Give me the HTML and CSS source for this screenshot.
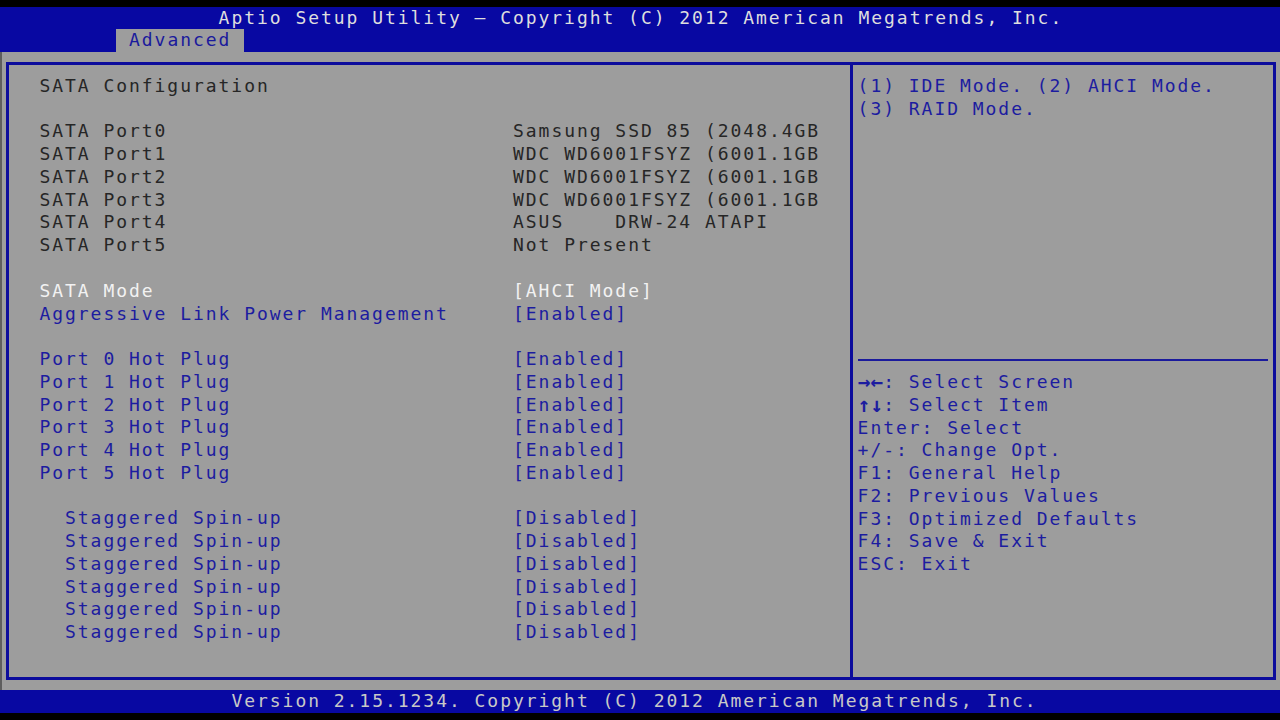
FILE: index.html
```html
<!DOCTYPE html>
<html>
<head>
<meta charset="utf-8">
<link rel="stylesheet" href="styles.css">
</head>
<body>
<div class="screen">
  <header class="header">
    <div class="row title">Aptio Setup Utility – Copyright (C) 2012 American Megatrends, Inc.</div>
    <div class="row tabs"><span class="tab"> Advanced </span></div>
  </header>
  <main class="main">
    <div class="box">
      <section class="left">
        <div class="row dark">SATA Configuration</div>
        <div class="row"></div>
        <div class="row item dark"><span class="label">SATA Port0</span><span class="value">Samsung SSD 85 (2048.4GB</span></div>
        <div class="row item dark"><span class="label">SATA Port1</span><span class="value">WDC WD6001FSYZ (6001.1GB</span></div>
        <div class="row item dark"><span class="label">SATA Port2</span><span class="value">WDC WD6001FSYZ (6001.1GB</span></div>
        <div class="row item dark"><span class="label">SATA Port3</span><span class="value">WDC WD6001FSYZ (6001.1GB</span></div>
        <div class="row item dark"><span class="label">SATA Port4</span><span class="value">ASUS    DRW-24 ATAPI</span></div>
        <div class="row item dark"><span class="label">SATA Port5</span><span class="value">Not Present</span></div>
        <div class="row"></div>
        <div class="row item selected"><span class="label">SATA Mode</span><span class="value">[AHCI Mode]</span></div>
        <div class="row item blue"><span class="label">Aggressive Link Power Management</span><span class="value">[Enabled]</span></div>
        <div class="row"></div>
        <div class="row item blue"><span class="label">Port 0 Hot Plug</span><span class="value">[Enabled]</span></div>
        <div class="row item blue"><span class="label">Port 1 Hot Plug</span><span class="value">[Enabled]</span></div>
        <div class="row item blue"><span class="label">Port 2 Hot Plug</span><span class="value">[Enabled]</span></div>
        <div class="row item blue"><span class="label">Port 3 Hot Plug</span><span class="value">[Enabled]</span></div>
        <div class="row item blue"><span class="label">Port 4 Hot Plug</span><span class="value">[Enabled]</span></div>
        <div class="row item blue"><span class="label">Port 5 Hot Plug</span><span class="value">[Enabled]</span></div>
        <div class="row"></div>
        <div class="row item blue sub"><span class="label">Staggered Spin-up</span><span class="value">[Disabled]</span></div>
        <div class="row item blue sub"><span class="label">Staggered Spin-up</span><span class="value">[Disabled]</span></div>
        <div class="row item blue sub"><span class="label">Staggered Spin-up</span><span class="value">[Disabled]</span></div>
        <div class="row item blue sub"><span class="label">Staggered Spin-up</span><span class="value">[Disabled]</span></div>
        <div class="row item blue sub"><span class="label">Staggered Spin-up</span><span class="value">[Disabled]</span></div>
        <div class="row item blue sub"><span class="label">Staggered Spin-up</span><span class="value">[Disabled]</span></div>
      </section>
      <aside class="right">
        <div class="help">
          <div class="row blue">(1) IDE Mode. (2) AHCI Mode.</div>
          <div class="row blue">(3) RAID Mode.</div>
        </div>
        <div class="sep"></div>
        <div class="keys">
          <div class="row blue"><b class="arr">→</b><b class="arr">←</b>: Select Screen</div>
          <div class="row blue"><b class="arr">↑</b><b class="arr">↓</b>: Select Item</div>
          <div class="row blue">Enter: Select</div>
          <div class="row blue">+/-: Change Opt.</div>
          <div class="row blue">F1: General Help</div>
          <div class="row blue">F2: Previous Values</div>
          <div class="row blue">F3: Optimized Defaults</div>
          <div class="row blue">F4: Save &amp; Exit</div>
          <div class="row blue">ESC: Exit</div>
        </div>
      </aside>
    </div>
  </main>
  <footer class="footer">
    <div class="row foot">Version 2.15.1234. Copyright (C) 2012 American Megatrends, Inc.</div>
  </footer>
</div>
</body>
</html>
```
FILE: styles.css
```css
html, body {
  margin: 0;
  padding: 0;
  background: #000;
}

.screen {
  width: 1280px;
  height: 720px;
  padding-top: 6.6px;
  box-sizing: border-box;
  display: flex;
  flex-direction: column;
  font-family: "DejaVu Sans Mono", "Liberation Mono", monospace;
  font-size: 18px;
  letter-spacing: 1.96px;
  overflow: hidden;
}

.row {
  height: 22.78px;
  line-height: 22.78px;
  white-space: pre;
}

.header {
  background: #0808a2;
  height: 45.56px;
  color: #dedede;
}

.title {
  padding-left: 218.6px;
}

.tabs {
  padding-left: 116.2px;
}

.tab {
  display: inline-block;
  background: #9d9d9d;
  color: #1a1a9c;
  height: 22.78px;
}

.main {
  background: #9d9d9d;
  height: 637.84px;
  box-sizing: border-box;
  padding: 9.8px 4px 10px 4px;
  border-left: 2px solid #5e5e5e;
  display: flex;
}

.box {
  flex: 1;
  border: 3px solid #0c0c9c;
  display: flex;
}

.left {
  width: 844px;
  flex: none;
  border-right: 3px solid #0c0c9c;
  padding: 9.94px 0 0 30.4px;
  box-sizing: border-box;
}

.right {
  flex: 1;
  padding: 9.94px 5px 0 4.6px;
  display: flex;
  flex-direction: column;
}

.help {
  height: 283.76px;
  flex: none;
}

.sep {
  height: 2px;
  flex: none;
  background: #1a1a9c;
  margin: 0 0 10.38px 0;
}

.item {
  display: flex;
}

.label {
  width: 473.6px;
  flex: none;
}

.sub .label {
  padding-left: 25.6px;
  width: 448px;
}

.dark {
  color: #262626;
}

.blue {
  color: #1c1ca0;
}

.selected {
  color: #f2f2f2;
}

.arr {
  display: inline-block;
  width: 12.8px;
  letter-spacing: 0;
  font-size: 21px;
  font-weight: bold;
  text-align: center;
  vertical-align: top;
}

.footer {
  background: #0808a2;
  height: 22.78px;
  color: #c8c8c8;
}

.foot {
  padding-left: 231.4px;
}
```
